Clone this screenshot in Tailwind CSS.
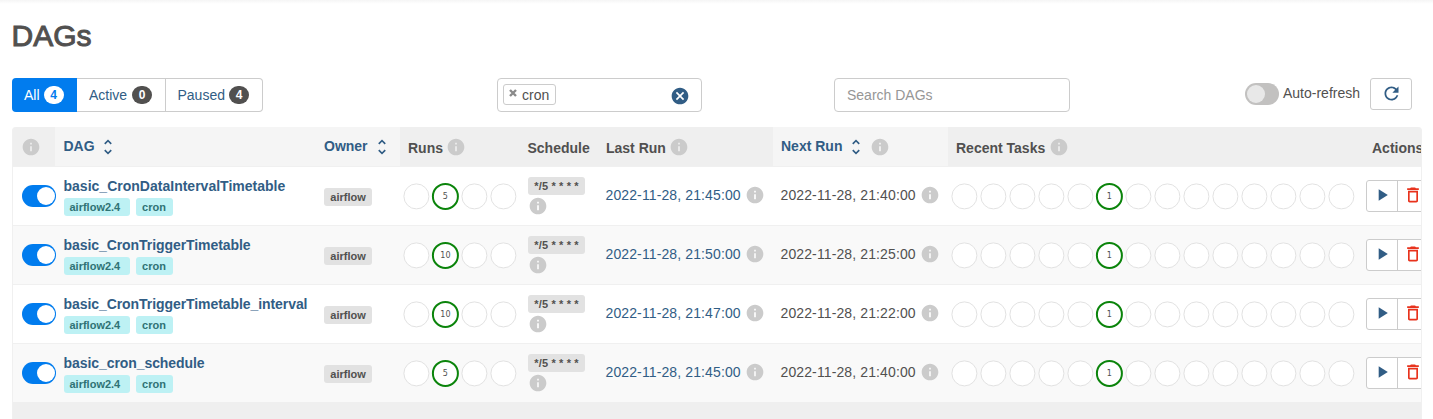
<!DOCTYPE html>
<html lang="en">
<head>
<meta charset="utf-8">
<title>DAGs</title>
<script src="https://cdn.jsdelivr.net/npm/@tailwindcss/browser@4"></script>
</head>
<body class="bg-white text-[#51504f] overflow-hidden h-[419px] text-sm leading-5" style="font-family:'Liberation Sans',Arial,sans-serif">
<svg class="hidden">
  <symbol id="info" viewBox="0 0 24 24"><path d="M12 2C6.48 2 2 6.48 2 12s4.48 10 10 10 10-4.48 10-10S17.52 2 12 2zm1 15h-2v-6h2v6zm0-8h-2V7h2v2z"/></symbol>
  <symbol id="sort" viewBox="0 0 24 24"><path d="M12 5.83L15.17 9l1.41-1.41L12 3 7.41 7.59 8.83 9 12 5.83zm0 12.34L8.83 15l-1.41 1.41L12 21l4.59-4.59L15.17 15 12 18.17z"/></symbol>
  <symbol id="cancel" viewBox="0 0 24 24"><path d="M12 2C6.47 2 2 6.47 2 12s4.47 10 10 10 10-4.47 10-10S17.53 2 12 2zm5 13.59L15.59 17 12 13.41 8.41 17 7 15.59 10.59 12 7 8.41 8.41 7 12 10.59 15.59 7 17 8.41 13.41 12 17 15.59z"/></symbol>
  <symbol id="refresh" viewBox="0 0 24 24"><path d="M17.65 6.35C16.2 4.9 14.21 4 12 4c-4.42 0-7.99 3.58-7.99 8s3.57 8 7.99 8c3.73 0 6.84-2.55 7.73-6h-2.08c-.82 2.33-3.04 4-5.65 4-3.31 0-6-2.69-6-6s2.69-6 6-6c1.66 0 3.14.69 4.22 1.78L13 11h7V4l-2.35 2.35z"/></symbol>
  <symbol id="play" viewBox="0 0 24 24"><path d="M8 5v14l11-7z"/></symbol>
  <symbol id="trash" viewBox="0 0 24 24"><path d="M6 19c0 1.1.9 2 2 2h8c1.1 0 2-.9 2-2V7H6v12zM8 9h8v10H8V9zm7.5-5l-1-1h-5l-1 1H5v2h14V4z"/></symbol>
</svg>
<div class="h-[4px] bg-gradient-to-b from-[#f5f5f5] to-white"></div>
<main class="pl-3 w-[1422px]">
  <h1 class="h-[74px] pt-[14px] -ml-[0.5px] text-[30px] leading-[36px] font-normal [-webkit-text-stroke:1px_#51504f]">DAGs</h1>
  <div class="flex h-[49px] items-start">
    <div class="flex h-[34px] text-[#315d85] whitespace-nowrap">
      <div class="w-[65px] bg-[#017cee] text-white rounded-l flex items-center pl-3 gap-1">All<span class="w-5 h-[18px] rounded-full bg-white text-[#017cee] text-xs leading-[18px] font-bold text-center">4</span></div>
      <div class="w-[88.5px] border-y border-r border-[#cccccc] flex items-center pl-3 gap-[5px]">Active<span class="w-5 h-[18px] rounded-full bg-[#51504f] text-white text-xs leading-[18px] font-bold text-center">0</span></div>
      <div class="w-[97px] border-y border-r border-[#cccccc] rounded-r flex items-center pl-3 gap-1">Paused<span class="w-5 h-[18px] rounded-full bg-[#51504f] text-white text-xs leading-[18px] font-bold text-center">4</span></div>
    </div>
    <div class="ml-[234.5px] w-[205px] h-[34px] border border-[#cccccc] rounded flex items-center justify-between pl-[5px] pr-[11.5px]">
      <span class="h-[21px] mb-[1px] w-[53px] border border-[#cccccc] rounded-[3px] flex items-center pl-[5px]"><svg class="w-2 h-2 mb-[3px] mr-[5px]" viewBox="0 0 8 8"><path d="M1 1L7 7M7 1L1 7" stroke="#8a8a8a" stroke-width="2.4"/></svg>cron</span>
      <svg class="size-5 fill-[#315d85] mt-[1px]"><use href="#cancel"/></svg>
    </div>
    <div class="ml-[132px] w-[236px] h-[34px] border border-[#cccccc] rounded flex items-center pl-3 text-[#969696]">Search DAGs</div>
    <div class="ml-[175px] mt-[5px] w-[34px] h-[22px] rounded-full bg-[#c2c1c0] p-[2px]"><div class="size-[18px] rounded-full bg-[#e8e8e8]"></div></div>
    <span class="ml-1 mt-[5px] w-[87px] whitespace-nowrap">Auto-refresh</span>
    <div class="w-[42px] h-8 border border-[#cccccc] rounded-[3px] flex justify-center pt-1"><svg class="size-[21px] fill-[#315d85]"><use href="#refresh"/></svg></div>
  </div>
  <section class="h-[300px] border-x border-[#f0f0f0] bg-[#efefef] rounded-t overflow-hidden">
    <div class="grid grid-cols-[42px_261px_84px_120px_78px_175px_175px_416px_90px] h-[39px] font-bold whitespace-nowrap">
      <div class="pl-2 pt-[9.5px]"><svg class="size-5 fill-[#cbcbcb]"><use href="#info"/></svg></div>
      <div class="bg-[#f5f5f5] flex pl-[8.5px] pt-[9px] text-[#315d85] gap-[3px]"><span>DAG</span><svg class="size-5 mt-[0.5px] fill-[#315d85]"><use href="#sort"/></svg></div>
      <div class="bg-[#f5f5f5] flex pl-2 pt-[9px] text-[#315d85] gap-1"><span>Owner</span><svg class="size-5 mt-[0.5px] shrink-0 fill-[#315d85]"><use href="#sort"/></svg></div>
      <div class="flex pl-2 gap-[3px]"><span class="pt-[11px]">Runs</span><svg class="size-5 mt-[9.5px] fill-[#cbcbcb]"><use href="#info"/></svg></div>
      <div class="pl-[7.5px] pt-[11px]">Schedule</div>
      <div class="flex pl-2 gap-[3px]"><span class="pt-[11px]">Last Run</span><svg class="size-5 mt-[9.5px] fill-[#cbcbcb]"><use href="#info"/></svg></div>
      <div class="bg-[#f5f5f5] flex pl-2 pt-[9px] text-[#315d85] gap-1"><span>Next Run</span><svg class="size-5 mt-[0.5px] fill-[#315d85]"><use href="#sort"/></svg><svg class="size-5 mt-[0.5px] fill-[#cbcbcb]"><use href="#info"/></svg></div>
      <div class="flex pl-2 gap-1"><span class="pt-[11px]">Recent Tasks</span><svg class="size-5 mt-[9.5px] fill-[#cbcbcb]"><use href="#info"/></svg></div>
      <div class="pl-2 pt-[11px]">Actions</div>
    </div>
    <div id="rows"></div>
  </section>
</main>
<script>
const dags = [
  ['basic_CronDataIntervalTimetable', 5, '21:45:00', '21:40:00'],
  ['basic_CronTriggerTimetable', 10, '21:50:00', '21:25:00'],
  ['basic_CronTriggerTimetable_interval', 10, '21:47:00', '21:22:00'],
  ['basic_cron_schedule', 5, '21:45:00', '21:40:00'],
];
const info = '<svg class="size-5 shrink-0 fill-[#cbcbcb]"><use href="#info"/></svg>';
const circles = (n, at, value) => `<svg class="h-7" width="${n * 29}" height="28">` +
  Array.from({length: n}, (_, i) => {
    const x = 14.4 + i * 29;
    return i === at
      ? `<circle cx="${x}" cy="14.4" r="12.5" fill="white" stroke="#0b840b" stroke-width="2"/><text class="text-[8px] fill-[#51504f]" style="font-family:'DejaVu Sans',sans-serif" x="${x}" y="17.4" text-anchor="middle">${value}</text>`
      : `<circle cx="${x}" cy="14.4" r="12.5" fill="white" stroke="#e2e2e2"/>`;
  }).join('') + '</svg>';
document.getElementById('rows').innerHTML = dags.map(([name, runs, last, next], i) => `
<div class="grid grid-cols-[42px_261px_84px_120px_78px_175px_175px_416px_90px] h-[59px] border-t border-[#f0f0f0] whitespace-nowrap ${i % 2 ? 'bg-[#f9f9f9]' : 'bg-white'}">
  <div class="pl-[9px] pt-[18px]"><div class="w-[34px] h-[22px] rounded-full bg-[#017cee] p-[2px] pr-[1.5px] flex justify-end"><div class="size-[18px] rounded-full bg-white"></div></div></div>
  <div class="pl-[8.5px] pt-[9px]"><div class="font-bold text-[#315d85] h-[22px] ${i ? 'tracking-[-0.07px]' : 'tracking-[0.01px]'}">${name}</div>
    <div class="flex gap-[6px] text-[11px] leading-[18px] font-bold text-[#2f7375]"><span class="w-[66px] h-[18px] rounded-[3px] bg-[#bdf1f4] pl-[6px]">airflow2.4</span><span class="w-[37px] h-[18px] rounded-[3px] bg-[#bdf1f4] text-center">cron</span></div></div>
  <div class="pl-2 pt-[21px]"><div class="w-12 h-[18px] rounded-[3px] bg-[#e2e2e2] text-[11px] leading-[18px] font-bold text-center">airflow</div></div>
  <div class="pl-[2px] pt-[15px]">${circles(4, 1, runs)}</div>
  <div class="pl-2 pt-[10px]"><div class="w-[57px] h-[18px] rounded-[3px] bg-[#e2e2e2] text-[11px] leading-[18px] font-bold text-center tracking-[0.15px]">*/5 * * * *</div><div class="-ml-[0.5px] mt-[0.5px]">${info}</div></div>
  <div class="flex pl-[7.5px] pt-[18px] gap-[4px] text-[#315d85]"><span class="tracking-[0.12px]">2022-11-28, ${last}</span>${info}</div>
  <div class="flex pl-[7.5px] pt-[18px] gap-[4px]"><span class="tracking-[0.12px]">2022-11-28, ${next}</span>${info}</div>
  <div class="pl-[2px] pt-[15px]">${circles(14, 5, 1)}</div>
  <div class="pl-[2px] pt-[13px]"><div class="flex w-16 h-8 bg-white border border-[#cccccc] rounded-[3px]"><div class="w-[31px] border-r border-[#cccccc] pt-[4px] pl-[5px]"><svg class="size-5 fill-[#315d85]"><use href="#play"/></svg></div><div class="pt-[4px] pl-[4.5px]"><svg class="size-5 fill-[#e8321c]"><use href="#trash"/></svg></div></div></div>
</div>`).join('');
</script>
</body>
</html>
